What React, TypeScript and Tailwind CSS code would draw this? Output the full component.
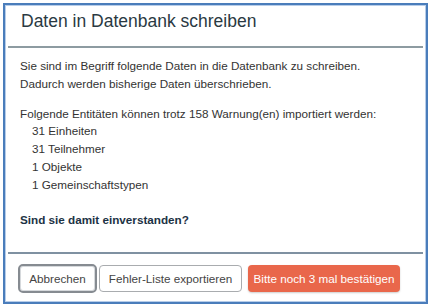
import React from "react";

export default function App() {
  return (
    <div className="w-[431px] h-[307px] bg-white pl-[3px] pt-[3px]" style={{ fontFamily: '"Liberation Sans", Arial, sans-serif' }}>
      <div className="w-[425px] h-[301px] border-2 border-[#4a7dbb]">
        <div className="h-full border border-[#b7cde9] px-[2px] flex flex-col">
          <div className="h-[42px] border-b-2 border-[#8d9ba1] pl-[13px] pt-[5px]">
            <div className="text-[17.5px] leading-[20px] text-[#2a3942]">Daten in Datenbank schreiben</div>
          </div>
          <div className="flex-1 border-b-2 border-[#7f91a1] pl-[12px] pt-[9px] text-[11.7px] leading-[17.7px] text-[#333]">
            <p>Sie sind im Begriff folgende Daten in die Datenbank zu schreiben.</p>
            <p>Dadurch werden bisherige Daten überschrieben.</p>
            <p className="mt-[12.3px]">Folgende Entitäten können trotz 158 Warnung(en) importiert werden:</p>
            <div className="pl-[12px]">
              <div>31 Einheiten</div>
              <div>31 Teilnehmer</div>
              <div>1 Objekte</div>
              <div>1 Gemeinschaftstypen</div>
            </div>
            <p className="mt-[17.3px] font-bold text-[#1c3245]">Sind sie damit einverstanden?</p>
          </div>
          <div className="h-[47px] pl-[10px] pt-[10px] flex items-start text-[11.7px]">
            <button className="w-[79px] h-[29px] rounded-[5px] border-2 border-[#868b91] shadow-[inset_0_0_0_1px_#d6d9dc] text-[#444] flex items-center justify-center">
              Abbrechen
            </button>
            <button className="ml-[2px] mt-[1px] w-[143px] h-[27px] rounded-[4px] border border-[#a9acaf] text-[#444] flex items-center justify-center">
              Fehler-Liste exportieren
            </button>
            <button className="ml-[6px] mt-[1px] w-[152px] h-[27px] rounded-[4px] bg-[#e9674b] text-white flex items-center justify-center shadow-[0_1px_2px_rgba(0,0,0,0.2)]">
              Bitte noch 3 mal bestätigen
            </button>
          </div>
        </div>
      </div>
    </div>
  );
}
